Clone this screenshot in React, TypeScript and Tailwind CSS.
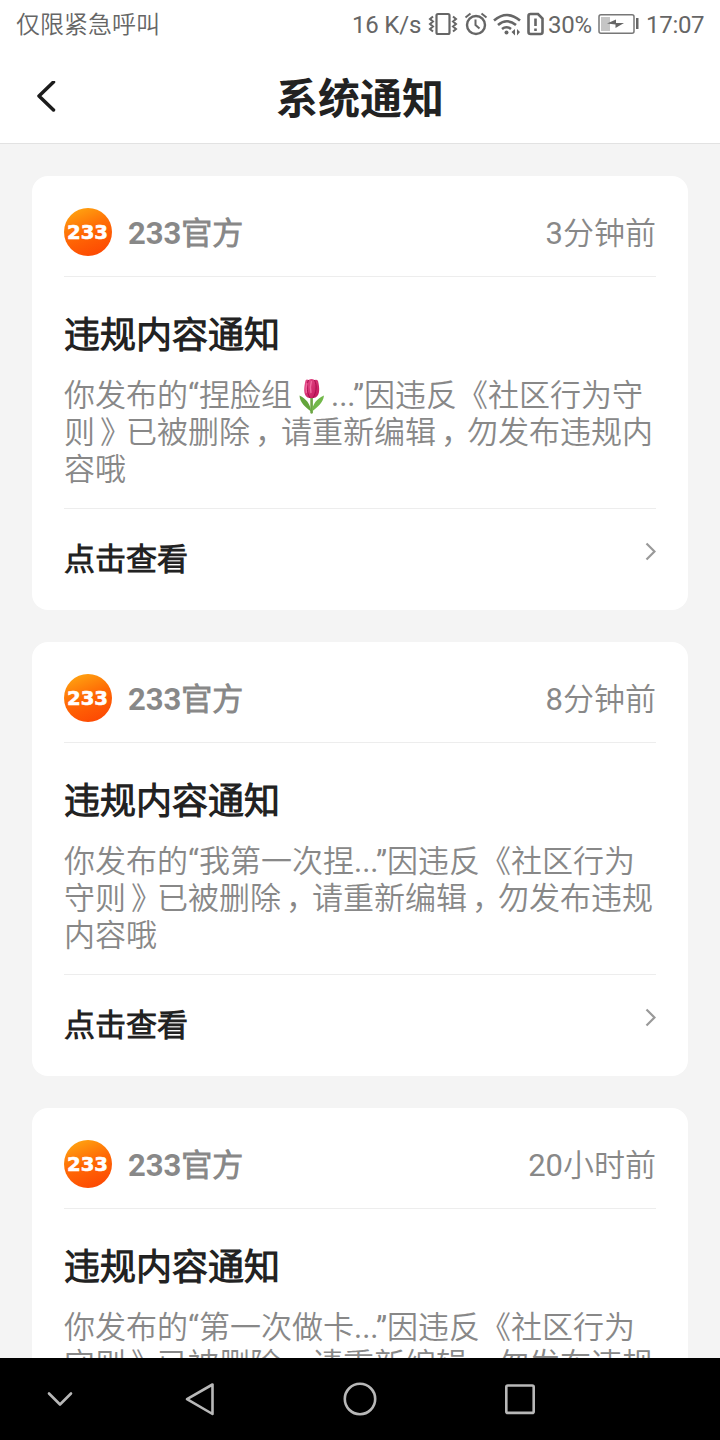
import React from "react";

type Notice = { time: string; lines: React.ReactNode[] };

function Tulip() {
  return (
    <svg className="mr-[5px] ml-[6px] inline-block h-[37px] w-[28px] align-[-9px]" viewBox="0 0 28 37">
      <defs>
        <linearGradient id="petal" x1="0" y1="0" x2="1" y2="1">
          <stop offset="0" stopColor="#e8508c" />
          <stop offset="1" stopColor="#c01058" />
        </linearGradient>
      </defs>
      <path d="M12.3 19h2.600v16q-1.300 1.500-2.600 0z" fill="#6da544" />
      <path d="M1.500 17.500C2 25 7 28.500 13 33.500C12.500 26 8 20.500 1.500 17.500z" fill="#63a53c" />
      <path d="M26 17.500C25 25 20 28.500 14 33.500C14.500 26 19 20.500 26 17.500z" fill="#72b84a" />
      <path d="M7.500 2.500Q8.500 1 10.500 2Q13.500 0 16.500 2Q19 1 20 3C21.500 9 22.500 17 17.500 19.500Q13.500 21 9.500 19.500C5 17 6 9 7.500 2.500z" fill="url(#petal)" />
      <path d="M10.500 2C8 8 9 15 12 20M16.500 2C19.500 8 18 15 15 20" stroke="#a90c4c" strokeWidth="1" fill="none" />
      <path d="M13.500 3Q11.500 9 13 15M9 5Q7.500 10 8.500 15" stroke="#f06aa0" strokeWidth="1.400" fill="none" />
    </svg>
  );
}

const notices: Notice[] = [
  {
    time: "3分钟前",
    lines: [
      <>你发布的“捏脸组<Tulip />...”因违反《社区行为守</>,
      <>则<Mark>》</Mark>已被删除<Mark>，</Mark>请重新编辑<Mark>，</Mark>勿发布违规内</>,
      "容哦",
    ],
  },
  {
    time: "8分钟前",
    lines: [
      "你发布的“我第一次捏...”因违反《社区行为",
      <>守则<Mark>》</Mark>已被删除<Mark>，</Mark>请重新编辑<Mark>，</Mark>勿发布违规</>,
      "内容哦",
    ],
  },
  {
    time: "20小时前",
    lines: [
      "你发布的“第一次做卡...”因违反《社区行为",
      <>守则<Mark>》</Mark>已被删除<Mark>，</Mark>请重新编辑<Mark>，</Mark>勿发布违规</>,
      "内容哦",
    ],
  },
];

/* Full-width punctuation, nudged towards the middle of its em box. */
function Mark({ children }: { children: string }) {
  return <span className="mr-[-5px] pl-[5px]">{children}</span>;
}

function Logo() {
  return (
    <svg className="h-12 w-12 shrink-0" viewBox="0 0 48 48">
      <defs>
        <linearGradient id="logo" x1="0.2" y1="0" x2="0.6" y2="1">
          <stop offset="0" stopColor="#ffa611" />
          <stop offset="0.5" stopColor="#ff6a05" />
          <stop offset="1" stopColor="#fd4a03" />
        </linearGradient>
      </defs>
      <circle cx="24" cy="24" r="24" fill="url(#logo)" />
      <text x="3" y="31" textLength="41" lengthAdjust="spacingAndGlyphs" fill="#fff" stroke="#fff" strokeWidth="0.600" fontFamily="DejaVu Sans" fontWeight="700" fontSize="20">
        233
      </text>
    </svg>
  );
}

function Card({ notice }: { notice: Notice }) {
  return (
    <article className="h-[434px] shrink-0 rounded-2xl bg-white px-8">
      <div className="flex h-[101px] items-center border-b border-[#ededed] pt-3 pb-0">
        <Logo />
        <span className="ml-4 pt-[4px] text-[31px] leading-[48px] font-bold text-[#888]">233官方</span>
        <span className="ml-auto pt-[4px] text-[31px] leading-[48px] text-[#888]">{notice.time}</span>
      </div>
      <div className="h-[232px] border-b border-[#ededed] pt-[34px]">
        <h2 className="text-[36px] leading-[50px] font-bold text-[#222]">违规内容通知</h2>
        <div className="mt-[16px] text-[31px] leading-[37px] text-[#888]">
          {notice.lines.map((line, i) => (
            <p key={i} className="h-[37px] whitespace-nowrap">{line}</p>
          ))}
        </div>
      </div>
      <div className="flex h-[100px] justify-between pt-[26px]">
        <span className="pt-[2px] text-[31px] leading-[46px] font-bold text-[#222]">点击查看</span>
        <svg className="mt-[6px] h-[22px] w-[14px]" viewBox="0 0 14 22" fill="none" stroke="#999" strokeWidth="2.200">
          <path d="M4.500 2.500l8 8-8 8" />
        </svg>
      </div>
    </article>
  );
}

function StatusBar() {
  return (
    <div className="flex h-[50px] items-center px-4 text-[24px] leading-[50px] text-[#666]">
      <span>仅限紧急呼叫</span>
      <span className="ml-auto w-[76px] whitespace-nowrap tracking-[-0.2px]">16 K/s</span>
      <svg className="h-[50px] w-[120px]" viewBox="428 0 120 50" fill="none" stroke="#666" strokeWidth="2">
        <rect x="436.500" y="14" width="13" height="20" rx="1.500" strokeWidth="2.200" />
        <path d="M433 16.500l-3 2.500 3 2.500-3 2.500 3 2.500-3 2.500 3 2.500M453 16.500l3 2.500-3 2.500 3 2.500-3 2.500 3 2.500-3 2.500" strokeWidth="2" />
        <circle cx="476" cy="25" r="9" strokeWidth="2.400" />
        <path d="M475.500 19.500V25l4 3.500M465.500 17.500l5-4M486.500 17.500l-5-4" />
        <path d="M494 20.500q13-11 26 0M498 25q9-7.500 18 0M502 29q4.500-3.500 9 0" strokeWidth="2.600" />
        <circle cx="506.500" cy="32.500" r="2" fill="#666" stroke="none" />
        <path d="M515 29v6.500l-3.500-3.500zM517 29v6.500l3-3.500z" fill="#666" stroke="none" />
        <path d="M530.500 14h7.500l4.500 4.500V32q0 2-2 2h-10q-2 0-2-2V16q0-2 2-2z" strokeWidth="2.600" />
        <path d="M535.500 18.500v7.500M535.500 28.500v2.500" strokeWidth="2.600" />
      </svg>
      <span className="w-[50px] tracking-[-0.3px]">30%</span>
      <svg className="h-[50px] w-[48px]" viewBox="598 0 48 50">
        <rect x="599" y="14.700" width="35" height="18.500" rx="2" fill="none" stroke="#777" strokeWidth="1.500" />
        <path d="M601 17h9v14h-9z" fill="#c5c5c5" />
        <path d="M607 23.500l9-4v3.500h8l-8.500 5v-3.500z" fill="#666" />
        <path d="M636 18h2.500v11H636z" fill="#666" />
      </svg>
      <span className="w-[58px] whitespace-nowrap tracking-[-0.3px]">17:07</span>
    </div>
  );
}

export default function App() {
  return (
    <div className="flex h-[1440px] w-[720px] flex-col overflow-hidden bg-[#f4f4f4] font-[Roboto,'Noto_Sans_CJK_SC_DemiLight','Noto_Sans_CJK_SC',sans-serif]">
      <header className="h-[144px] shrink-0 border-b border-[#e2e2e2] bg-white">
        <StatusBar />
        <div className="grid h-[93px] grid-cols-[1fr_auto_1fr] items-center px-8">
          <svg className="h-8 w-7" viewBox="0 0 28 32" fill="none" stroke="#1c1c1c" strokeWidth="3.500" strokeLinecap="round" strokeLinejoin="round">
            <path d="M21.500 1L7 15 21.500 29" />
          </svg>
          <h1 className="pt-[6px] font-[Roboto,'Noto_Sans_CJK_SC',sans-serif] text-[42px] leading-[60px] font-bold text-[#222]">系统通知</h1>
        </div>
      </header>
      <main className="flex min-h-0 flex-1 flex-col gap-8 overflow-hidden px-8 pt-8">
        {notices.map((n) => (
          <Card key={n.time} notice={n} />
        ))}
      </main>
      <nav className="flex h-[82px] shrink-0 items-center bg-black">
        <svg className="h-[82px] w-[600px]" viewBox="0 0 600 82" fill="none" stroke="#b8b8b8" strokeWidth="2.600" strokeLinecap="round" strokeLinejoin="round">
          <path d="M49 35.500L60 46.500 71 35.500" />
          <path d="M212.500 26.500v29.500L187 41.200z" />
          <circle cx="360" cy="41" r="15.200" />
          <rect x="506.300" y="27.500" width="27.400" height="27.400" rx="1.500" />
        </svg>
      </nav>
    </div>
  );
}
